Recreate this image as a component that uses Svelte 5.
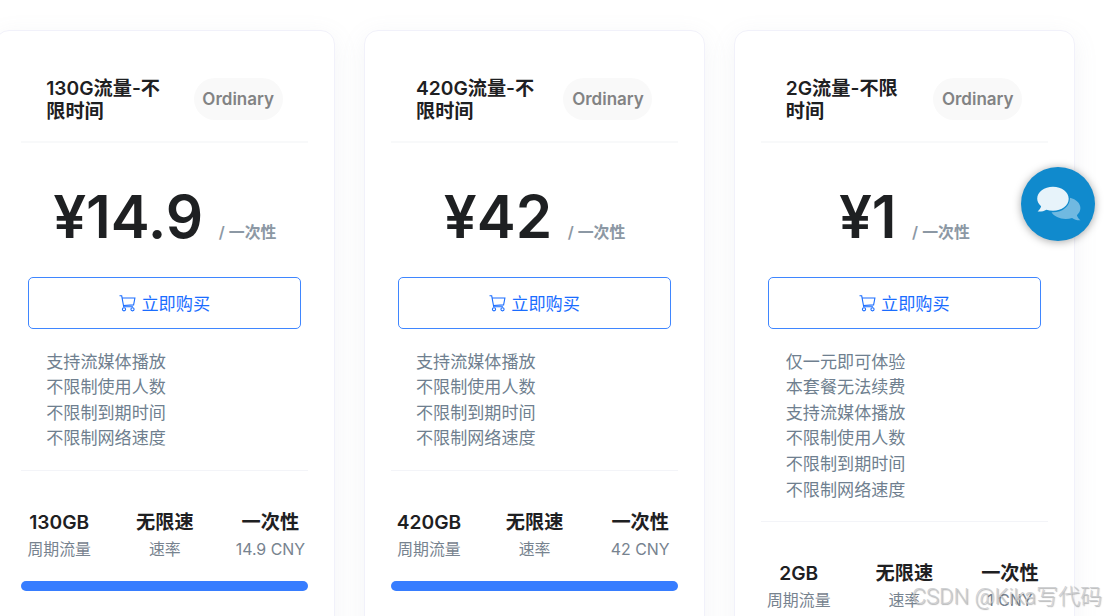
<script>
  const plans = [
    {
      name: "130G流量-不限时间",
      price: "14.9",
      traffic: "130GB",
      features: ["支持流媒体播放", "不限制使用人数", "不限制到期时间", "不限制网络速度"],
    },
    {
      name: "420G流量-不限时间",
      price: "42",
      traffic: "420GB",
      features: ["支持流媒体播放", "不限制使用人数", "不限制到期时间", "不限制网络速度"],
    },
    {
      name: "2G流量-不限时间",
      price: "1",
      traffic: "2GB",
      features: [
        "仅一元即可体验",
        "本套餐无法续费",
        "支持流媒体播放",
        "不限制使用人数",
        "不限制到期时间",
        "不限制网络速度",
      ],
    },
  ];
</script>

<div class="page">
  <div class="plans">
    {#each plans as plan}
      <div class="card">
        <!-- Plan name and level -->
        <div class="card-header">
          <h4>{plan.name}</h4>
          <span class="badge">Ordinary</span>
        </div>

        <!-- Price -->
        <div class="price">
          <span class="amount">¥{plan.price}</span>
          <span class="period">/ 一次性</span>
        </div>

        <button class="buy">
          <svg viewBox="0 0 17 17" width="17" height="17">
            <path d="M0.5 0.8h2.200l2 11h9.300M3.200 3h12.700l-1.300 6.900-10.200.6" />
            <circle cx="5" cy="14.300" r="1.600" />
            <circle cx="13.500" cy="14.300" r="1.600" />
          </svg>
          <span>立即购买</span>
        </button>

        <ul class="features">
          {#each plan.features as feature}
            <li>{feature}</li>
          {/each}
        </ul>

        <!-- Traffic, speed and billing -->
        <div class="stats">
          <div class="stat">
            <strong>{plan.traffic}</strong>
            <span>周期流量</span>
          </div>
          <div class="stat">
            <strong>无限速</strong>
            <span>速率</span>
          </div>
          <div class="stat">
            <strong>一次性</strong>
            <span>{plan.price} CNY</span>
          </div>
        </div>
        <div class="bar"></div>
      </div>
    {/each}
  </div>

  <!-- Floating chat button -->
  <button class="chat" aria-label="Chat">
    <svg viewBox="0 0 46 36" width="46" height="36">
      <path
        class="back"
        d="M34 11.700c6.200 1.600 10.400 5.500 10.400 10.300 0 2.800-1.300 5.200-3.500 7.200.6 2 1.900 3.600 3.500 5-3.100.2-5.900-.7-8.300-2.300-2 .7-4.100 1-6.400 1-6.300 0-11.800-2.600-14.200-6.600 10.700.6 18.600-6.200 18.500-14.600z"
      />
      <path
        class="front"
        d="M17 .8c8.800 0 15.700 5.300 15.700 12s-6.900 12-15.700 12c-2.300 0-4.600-.4-6.600-1.100-2.400 1.400-5.200 2-8.800 1.800 1.800-1.500 3-3.200 3.500-5.200C2.700 18.200 1.200 15.700 1.200 12.800 1.200 6.100 8.200.8 17 .8z"
      />
    </svg>
  </button>

  <div class="watermark">CSDN @Kika写代码</div>
</div>

<style>
  :global(body) {
    margin: 0;
    overflow: hidden;
    background: #fff;
  }

  .page {
    position: relative;
    height: 616px;
    overflow: hidden;
    font-family: Inter, "Noto Sans CJK SC", sans-serif;
    color: #1e2022;
  }

  .plans {
    display: flex;
    align-items: flex-start;
    gap: 29.400px;
    padding-top: 30px;
    margin-left: -5.400px;
  }

  .card {
    box-sizing: border-box;
    flex: none;
    width: 340.400px;
    height: 680px;
    padding: 25px 25.600px;
    border: 1px solid #f1f1fa;
    border-radius: 14px;
    box-shadow: 0 6px 24px rgba(140, 152, 164, 0.100);
  }

  .card-header {
    display: flex;
    align-items: center;
    box-sizing: border-box;
    height: 87px;
    padding: 1px 25px 0 25px;
    border-bottom: 2px solid #f8f9fa;
  }

  h4 {
    width: 121px;
    margin: 2px 26.500px 0 0;
    font-size: 19.200px;
    font-weight: 600;
    line-height: 23.500px;
    word-break: break-all;
  }

  .badge {
    width: 89px;
    height: 42px;
    border-radius: 21px;
    background: #f9f9f9;
    color: #828384;
    font-size: 17px;
    font-weight: 600;
    line-height: 43px;
    text-align: center;
  }

  .price {
    display: flex;
    align-items: baseline;
    justify-content: center;
    gap: 15.500px;
    height: 134px;
    line-height: 147px;
  }

  .amount {
    font-size: 58.500px;
    font-weight: 600;
  }

  .period {
    color: #8c98a4;
    font-size: 15.900px;
    font-weight: 600;
  }

  .buy {
    display: flex;
    align-items: center;
    justify-content: center;
    gap: 5px;
    width: 273px;
    height: 52px;
    margin: 0 auto;
    padding: 0;
    border: 1px solid #3f86ff;
    border-radius: 5px;
    background: #fff;
    color: #1a6dff;
    font: 400 17.200px/24px Inter, "Noto Sans CJK SC", sans-serif;
  }

  .buy span {
    margin-top: 1px;
  }

  .buy svg {
    fill: none;
    stroke: currentColor;
    stroke-width: 1.100;
  }

  .features {
    margin: 0;
    padding: 19.600px 25px 18.900px 25px;
    border-bottom: 1px solid #f3f4f8;
    color: #6f7f8f;
    font-size: 17.100px;
    font-weight: 400;
    line-height: 25.600px;
    list-style: none;
  }

  .stats {
    display: flex;
    justify-content: space-between;
    padding-top: 38.400px;
  }

  .stat {
    display: flex;
    flex-direction: column;
    align-items: center;
    width: 76px;
    text-align: center;
  }

  .stat strong {
    font-size: 19.200px;
    font-weight: 600;
    line-height: 27px;
  }

  .stat span {
    color: #77838f;
    font-size: 15.900px;
    line-height: 27px;
    white-space: nowrap;
  }

  .bar {
    height: 10px;
    margin-top: 17.600px;
    border-radius: 5px;
    background: #377dff;
  }

  .chat {
    position: absolute;
    top: 167px;
    left: 1021px;
    display: grid;
    place-items: center;
    width: 74px;
    height: 74px;
    padding: 0 0 0 1px;
    border: none;
    border-radius: 50%;
    background: #108acd;
    box-shadow: 0 1px 8px rgba(0, 0, 0, 0.350);
  }

  .front {
    fill: #e7f3fa;
  }

  .back {
    fill: #70b9e1;
  }

  .watermark {
    position: absolute;
    right: 4px;
    bottom: 5px;
    color: rgba(200, 202, 205, 0.850);
    font-family: Roboto, "Noto Sans CJK SC", sans-serif;
    font-size: 22px;
    font-weight: 300;
    line-height: 28px;
    white-space: nowrap;
    text-shadow: 1px 1px 1px rgba(90, 90, 90, 0.450);
  }
</style>
